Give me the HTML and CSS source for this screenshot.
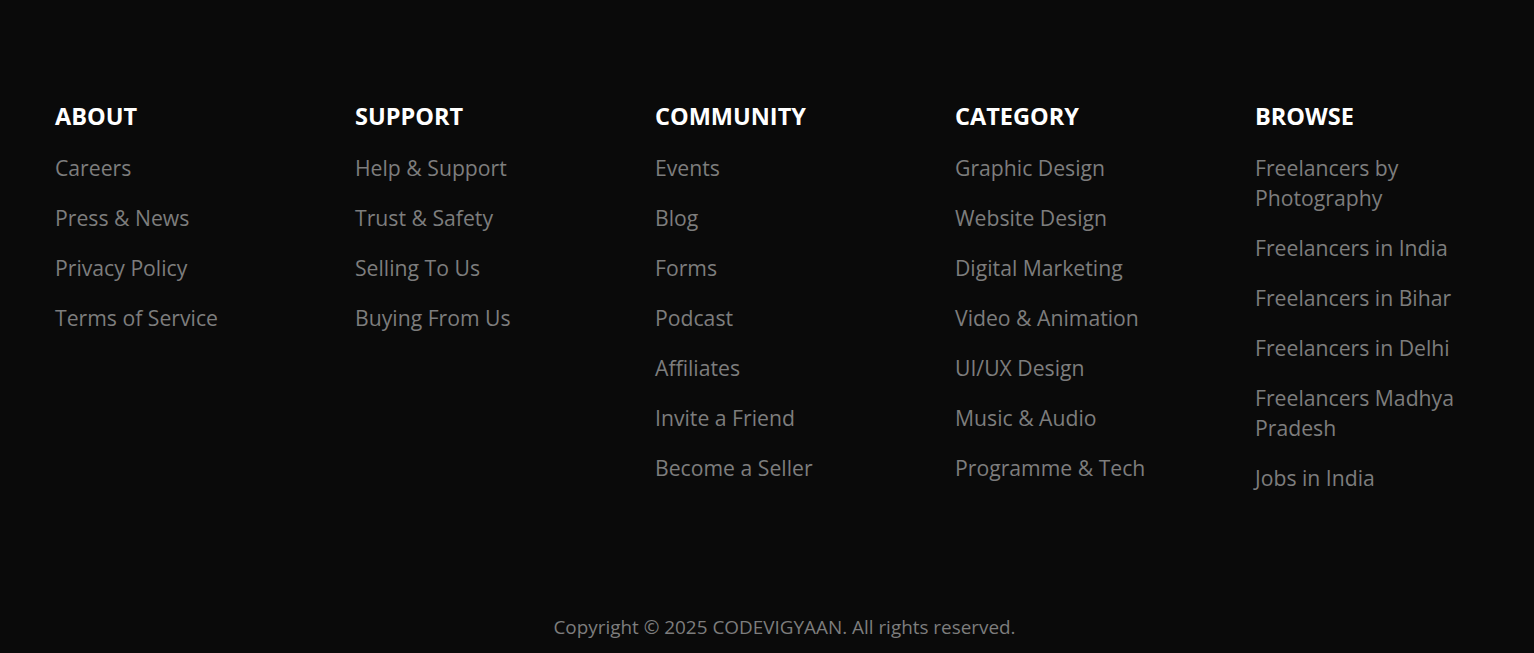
FILE: index.html
```html
<!DOCTYPE html>
<html lang="en">
<head>
<meta charset="utf-8">
<title>Footer</title>
<link rel="stylesheet" href="styles.css">
</head>
<body>
<footer class="footer">
  <div class="columns">
    <div class="col">
      <h3 class="col-title">ABOUT</h3>
      <ul class="links">
        <li>Careers</li>
        <li>Press &amp; News</li>
        <li>Privacy Policy</li>
        <li>Terms of Service</li>
      </ul>
    </div>
    <div class="col">
      <h3 class="col-title">SUPPORT</h3>
      <ul class="links">
        <li>Help &amp; Support</li>
        <li>Trust &amp; Safety</li>
        <li>Selling To Us</li>
        <li>Buying From Us</li>
      </ul>
    </div>
    <div class="col">
      <h3 class="col-title">COMMUNITY</h3>
      <ul class="links">
        <li>Events</li>
        <li>Blog</li>
        <li>Forms</li>
        <li>Podcast</li>
        <li>Affiliates</li>
        <li>Invite a Friend</li>
        <li>Become a Seller</li>
      </ul>
    </div>
    <div class="col">
      <h3 class="col-title">CATEGORY</h3>
      <ul class="links">
        <li>Graphic Design</li>
        <li>Website Design</li>
        <li>Digital Marketing</li>
        <li>Video &amp; Animation</li>
        <li>UI/UX Design</li>
        <li>Music &amp; Audio</li>
        <li>Programme &amp; Tech</li>
      </ul>
    </div>
    <div class="col">
      <h3 class="col-title">BROWSE</h3>
      <ul class="links">
        <li>Freelancers by Photography</li>
        <li>Freelancers in India</li>
        <li>Freelancers in Bihar</li>
        <li>Freelancers in Delhi</li>
        <li>Freelancers Madhya Pradesh</li>
        <li>Jobs in India</li>
      </ul>
    </div>
  </div>
  <p class="copyright">Copyright © 2025 CODEVIGYAAN. All rights reserved.</p>
</footer>
</body>
</html>
```
FILE: styles.css
```css
html, body {
  margin: 0;
  padding: 0;
  background: #0a0a0a;
}
body {
  font-family: "Open Sans", "Liberation Sans", sans-serif;
  height: 653px;
  overflow: hidden;
}
.footer {
  padding: 98px 55px 0 55px;
}
.columns {
  display: grid;
  grid-template-columns: repeat(5, 1fr);
  column-gap: 76px;
  height: 516px;
}
.col-title {
  margin: 0 0 19px 0;
  font-size: 23.5px;
  line-height: 36px;
  font-weight: 700;
  color: #ffffff;
}
.links {
  list-style: none;
  margin: 0;
  padding: 0;
  display: flex;
  flex-direction: column;
  gap: 20px;
}
.links li {
  font-size: 21.2px;
  line-height: 30px;
  color: #7d7d7d;
}
.copyright {
  margin: 0;
  padding-left: 35px;
  text-align: center;
  font-size: 18.9px;
  line-height: 26px;
  color: #7d7d7d;
}
```
